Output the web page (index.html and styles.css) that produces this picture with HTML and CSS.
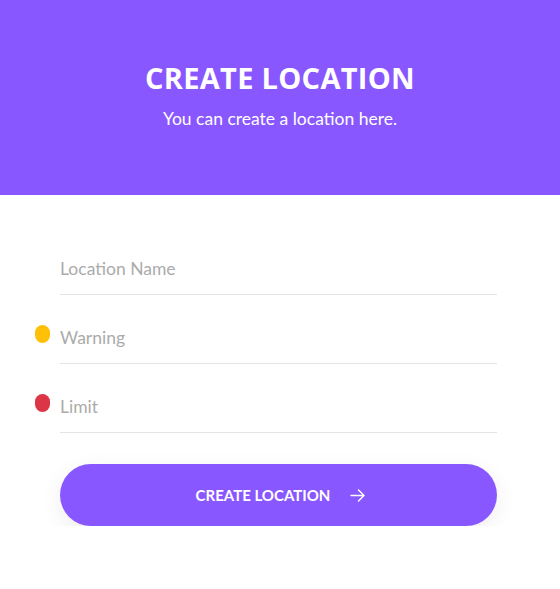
FILE: index.html
```html
<!DOCTYPE html>
<html lang="en">
<head>
  <meta charset="UTF-8">
  <meta name="viewport" content="width=device-width, initial-scale=1.0">
  <title>Create Location</title>
  <link rel="stylesheet" href="styles.css">
</head>
<body>
  <div class="header">
    <h1>CREATE LOCATION</h1>
    <p>You can create a location here.</p>
  </div>

  <form class="form">
    <div class="field">
      <input type="text" placeholder="Location Name">
    </div>
    <div class="field">
      <span class="dot warning"></span>
      <input type="text" placeholder="Warning">
    </div>
    <div class="field">
      <span class="dot limit"></span>
      <input type="text" placeholder="Limit">
    </div>
    <button type="button" class="submit">
      CREATE LOCATION
      <svg width="15" height="13" viewBox="0 0 15 13" fill="none" stroke="#fff" stroke-width="1.4" stroke-linecap="round" stroke-linejoin="round">
        <path d="M1 6.5h13M8.5 1l5.5 5.5L8.5 12"/>
      </svg>
    </button>
  </form>
</body>
</html>
```

FILE: styles.css
```css
body {
  margin: 0;
  font-family: Lato, "Open Sans", sans-serif;
  background: #fff;
}
.header {
  background: #8957ff;
  height: 195px;
  box-sizing: border-box;
  padding-top: 61px;
  text-align: center;
  color: #fff;
}
.header h1 {
  margin: 0;
  font-family: "Open Sans", sans-serif;
  font-weight: 700;
  font-size: 29px;
  line-height: 34px;
  letter-spacing: 0.3px;
}
.header p {
  margin: 13px 0 0;
  font-size: 17.5px;
  line-height: 22px;
}
.form {
  width: 437px;
  margin: 31px 0 0 60px;
}
.field {
  position: relative;
  padding: 33px 0 15px;
  border-bottom: 1px solid #e4e4e4;
}
.field input {
  display: block;
  width: 100%;
  border: none;
  outline: none;
  padding: 0;
  font-family: Lato, sans-serif;
  font-size: 17.5px;
  line-height: 20px;
  height: 20px;
  color: #555;
  background: transparent;
}
.field input::placeholder {
  color: #ababab;
}
.dot {
  position: absolute;
  left: -25px;
  top: 30px;
  width: 15px;
  height: 18px;
  border-radius: 8px;
}
.dot.warning {
  background: #ffc107;
}
.dot.limit {
  background: #dc3545;
}
.submit {
  display: flex;
  align-items: center;
  justify-content: center;
  gap: 20px;
  width: 100%;
  height: 62px;
  margin-top: 31px;
  border: none;
  border-radius: 31px;
  background: #8957ff;
  color: #fff;
  font-family: Lato, sans-serif;
  font-weight: 700;
  font-size: 15px;
  padding: 0 0 0 4px;
  box-shadow: 0 6px 22px rgba(0,0,0,0.07);
  cursor: pointer;
}
```
